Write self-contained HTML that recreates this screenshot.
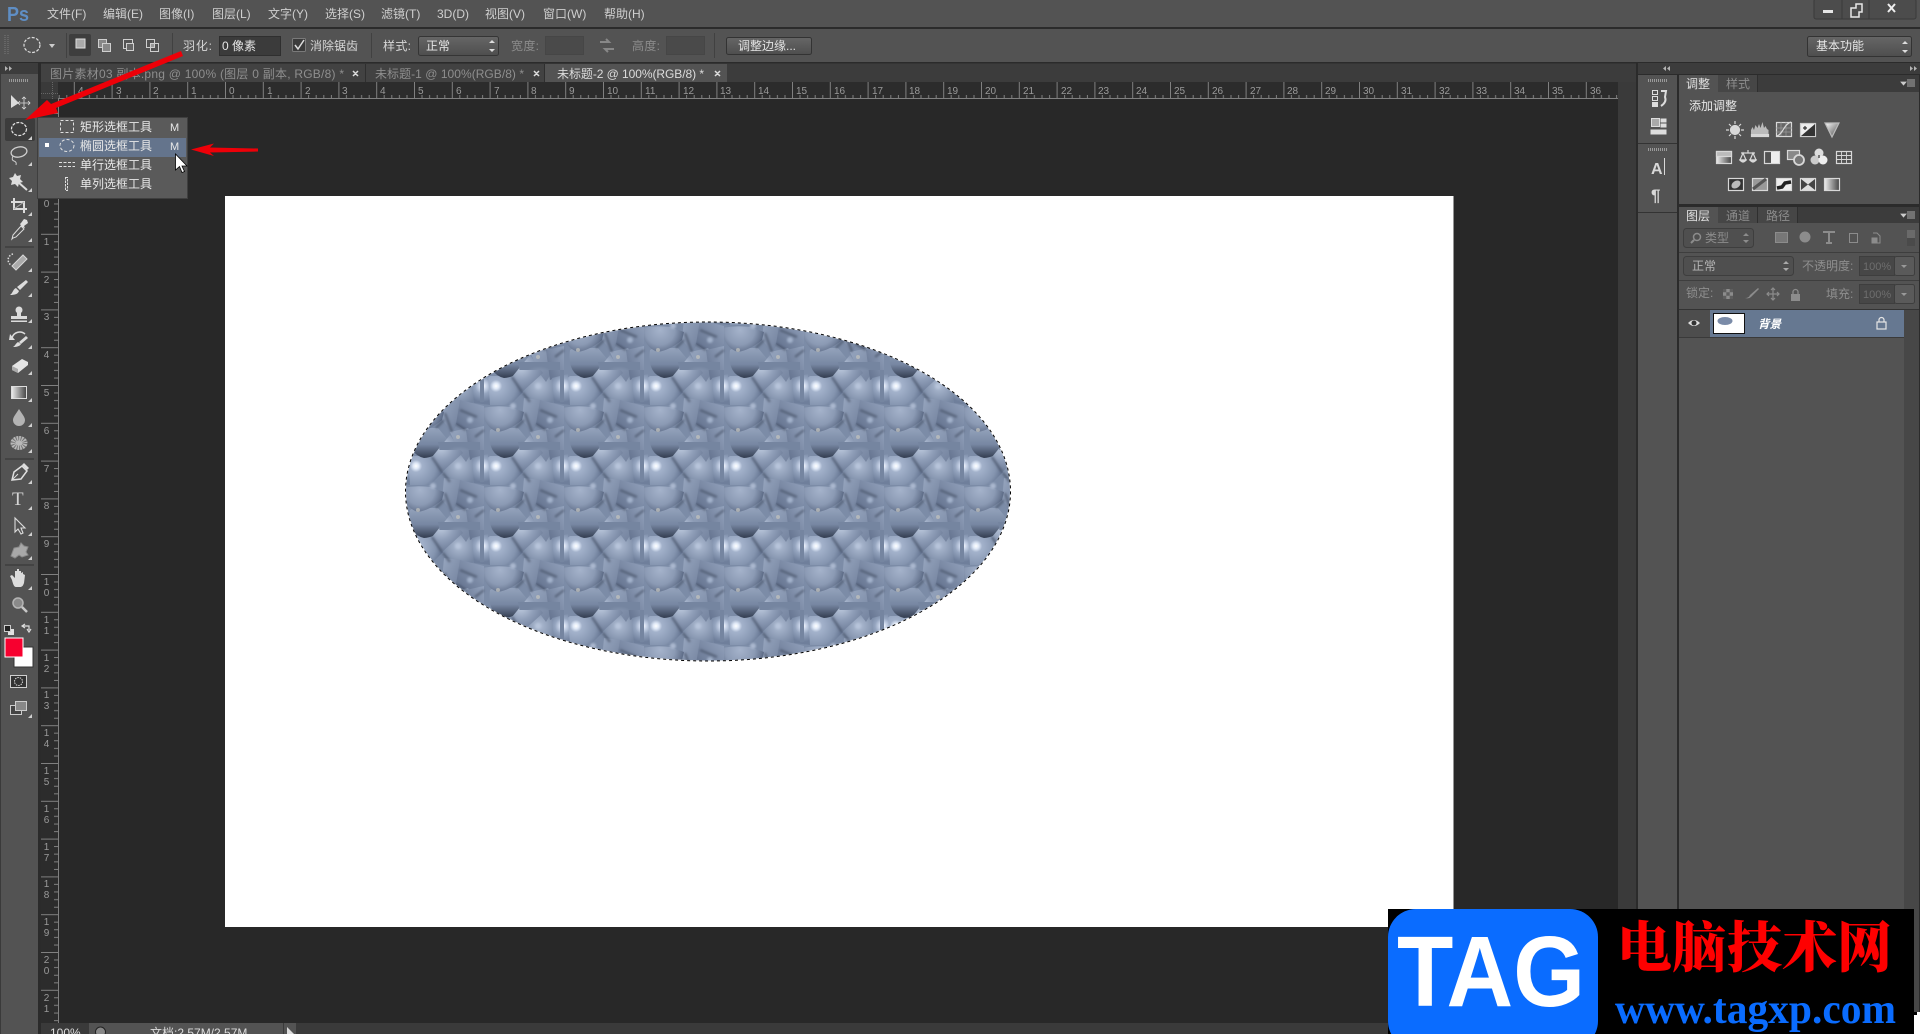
<!DOCTYPE html>
<html lang="zh"><head><meta charset="utf-8"><title>Photoshop</title>
<style>html,body{margin:0;padding:0;background:#282828;overflow:hidden}svg{display:block}text{white-space:pre}</style></head>
<body>
<svg xmlns="http://www.w3.org/2000/svg" width="1920" height="1034" viewBox="0 0 1920 1034" font-family="'Liberation Sans','WenQuanYi Zen Hei','Noto Sans CJK SC',sans-serif" font-size="12">
<defs>
<filter id="soft" x="-20%" y="-20%" width="140%" height="140%"><feGaussianBlur stdDeviation="1"/></filter>
<pattern id="rt" patternUnits="userSpaceOnUse" x="225" y="82" width="37.8" height="17">
<path d="M.5 0V17M8 13V17M15.6 13V17M23.2 13V17M30.8 13V17" stroke="#808080" fill="none"/>
</pattern>
<pattern id="rl" patternUnits="userSpaceOnUse" x="41" y="196" width="17" height="37.8">
<path d="M0 .5H17M13 8H17M13 15.6H17M13 23.2H17M13 30.8H17" stroke="#808080" fill="none"/>
</pattern>
<radialGradient id="sa" gradientUnits="userSpaceOnUse" cx="16" cy="16" r="28"><stop offset="0" stop-color="#fff"/><stop offset=".1" stop-color="#dfe8f7"/><stop offset=".22" stop-color="#a3b2cb"/><stop offset=".7" stop-color="#8595b0"/><stop offset="1" stop-color="#5f6f8c"/></radialGradient>
<radialGradient id="sb" gradientUnits="userSpaceOnUse" cx="3" cy="16" r="16"><stop offset="0" stop-color="#fff"/><stop offset=".2" stop-color="#cdd8ec"/><stop offset=".5" stop-color="#95a5bf"/><stop offset="1" stop-color="#6f7f9b"/></radialGradient>
<radialGradient id="sc" gradientUnits="userSpaceOnUse" cx="20" cy="40" r="27"><stop offset="0" stop-color="#a5b3cb"/><stop offset=".55" stop-color="#8b9ab4"/><stop offset="1" stop-color="#4f5d78"/></radialGradient>
<linearGradient id="sd" gradientUnits="userSpaceOnUse" x1="0" y1="58" x2="0" y2="88"><stop offset="0" stop-color="#94a3bc"/><stop offset=".55" stop-color="#7787a2"/><stop offset="1" stop-color="#333d50"/></linearGradient>
<radialGradient id="se" gradientUnits="userSpaceOnUse" cx="41" cy="77" r="26"><stop offset="0" stop-color="#f2f6fd"/><stop offset=".12" stop-color="#b4c1d6"/><stop offset=".5" stop-color="#8f9eb8"/><stop offset="1" stop-color="#6c7b97"/></radialGradient>
<linearGradient id="sf" x1="0" y1="0" x2="1" y2="1"><stop offset="0" stop-color="#98a7c0"/><stop offset="1" stop-color="#6d7c98"/></linearGradient>
<linearGradient id="sg" x1="1" y1="0" x2="0" y2="1"><stop offset="0" stop-color="#94a3bd"/><stop offset="1" stop-color="#5f6e8a"/></linearGradient>
<radialGradient id="sh" gradientUnits="userSpaceOnUse" cx="59" cy="16" r="20"><stop offset="0" stop-color="#aebcd3"/><stop offset="1" stop-color="#7585a0"/></radialGradient>
<g id="tile">
<polygon points="38,-8 84,-8 84,32 58,34 44,24" fill="url(#sh)"/>
<polygon points="44,28 62,30 60,50 52,62 42,50" fill="url(#sf)"/>
<polygon points="60,30 84,36 84,54 68,62 56,54" fill="url(#sg)"/>
<polygon points="50,62 68,58 78,72 66,92 60,84" fill="url(#sf)"/>
<polygon points="66,60 84,56 84,84 70,90" fill="url(#sg)"/>
<path d="M10 60Q7 84 24 88Q40 87 48 70L38 58L14 58Z" fill="url(#sd)"/>
<polygon points="50,65 32,87 42,102 63,83" fill="url(#se)"/>
<polygon points="10,6 32,6 43,22 30,35 4,35 5,10" fill="url(#sa)"/>
<polygon points="-8,8 8,4 10,35 -6,33" fill="url(#sb)"/>
<path d="M2 38Q16 35 30 37L44 42L42 50Q30 60 18 62Q4 58 2 38Z" fill="url(#sc)"/>
<path d="M43 23L50 32M45 43L52 62M60 40L77 47M75 67L84 60M32 87L42 102M44 50L36 58M66 60L56 54" stroke="#3a4559" stroke-width="2.500" fill="none" opacity=".55" filter="url(#soft)"/>
<circle cx="18" cy="60" r="2" fill="#c4c4be" opacity=".7"/>
<circle cx="58" cy="67" r="2" fill="#c4c4be" opacity=".7"/>
<circle cx="33" cy="36" r="3" fill="#aab8cf" filter="url(#soft)"/>
<circle cx="58" cy="16" r="3" fill="#b7c4da" filter="url(#soft)"/>
<circle cx="70" cy="50" r="3" fill="#a3b2cb" filter="url(#soft)"/>
</g>
<pattern id="bub" patternUnits="userSpaceOnUse" x="480" y="370" width="80" height="80">
<rect width="80" height="80" fill="#7c8ca7"/>
<use href="#tile"/><use href="#tile" y="80"/><use href="#tile" y="-80"/><use href="#tile" x="80"/><use href="#tile" x="-80"/>
</pattern>
<linearGradient id="btn" x1="0" y1="0" x2="0" y2="1"><stop offset="0" stop-color="#666"/><stop offset="1" stop-color="#4e4e4e"/></linearGradient>
<linearGradient id="gr" x1="0" y1="0" x2="1" y2="1"><stop offset="0" stop-color="#fff"/><stop offset="1" stop-color="#444"/></linearGradient>
<linearGradient id="gh" x1="0" y1="0" x2="1" y2="0"><stop offset="0" stop-color="#eee"/><stop offset="1" stop-color="#444"/></linearGradient>
<polygon id="tr" points="4,0 4,4 0,4" fill="#d0d0d0"/>
</defs>

<!-- base -->
<rect width="1920" height="1034" fill="#282828"/>
<rect width="1920" height="27" fill="#535353"/>
<rect y="27" width="1920" height="2" fill="#2b2b2b"/>
<rect y="29" width="1920" height="33" fill="#535353"/>
<rect y="62" width="1920" height="1.5" fill="#2b2b2b"/>

<!-- menu -->
<text x="7" y="21" font-size="20" font-weight="bold" fill="#5f8ec4" textLength="22" lengthAdjust="spacingAndGlyphs">Ps</text>
<g fill="#cfcfcf">
<text x="47" y="18">文件(F)</text><text x="103" y="18">编辑(E)</text><text x="159" y="18">图像(I)</text><text x="212" y="18">图层(L)</text><text x="268" y="18">文字(Y)</text><text x="325" y="18">选择(S)</text><text x="381" y="18">滤镜(T)</text><text x="437" y="18">3D(D)</text><text x="485" y="18">视图(V)</text><text x="543" y="18">窗口(W)</text><text x="604" y="18">帮助(H)</text>
</g>
<!-- window buttons -->
<rect x="1814" y="-1" width="102" height="20" rx="2" fill="#4c4c4c" stroke="#3a3a3a"/>
<path d="M1842 0V19M1869 0V19" stroke="#3a3a3a"/>
<rect x="1823" y="10" width="10" height="3" fill="#e6e6e6"/>
<path d="M1851 8h5v-4h6v8h-3v5h-8z" fill="none" stroke="#e6e6e6" stroke-width="1.5"/>
<path d="M1888 4l7 8M1895 4l-7 8" stroke="#eee" stroke-width="2"/>

<!-- options bar -->
<path d="M5 35V55M8 35V55" stroke="#7a7a7a" stroke-dasharray="1,1"/>
<ellipse cx="32" cy="45" rx="8" ry="7.5" fill="none" stroke="#ddd" stroke-width="1.2" stroke-dasharray="3,1.5"/>
<polygon points="49,44 55,44 52,48" fill="#ccc"/>
<path d="M66.500 33V58M172.500 33V58M371.500 33V58M714.500 33V58" stroke="#414141"/>
<rect x="69" y="34" width="22" height="22" rx="2" fill="#3e3e3e"/>
<rect x="76" y="39" width="9" height="9" fill="#aaa" stroke="#ddd"/>
<g fill="none" stroke="#cfcfcf"><rect x="98.500" y="39.500" width="8" height="8" fill="#888"/><rect x="102.500" y="43.500" width="8" height="8" fill="#888"/>
<rect x="123.500" y="39.500" width="9" height="9"/><rect x="126.500" y="43.500" width="7" height="7" fill="#666"/>
<rect x="146.500" y="39.500" width="8" height="8"/><rect x="150.500" y="43.500" width="8" height="8"/><rect x="150.500" y="43.500" width="4" height="4" fill="#999"/></g>
<text x="183" y="50" fill="#d6d6d6" textLength="29">羽化:</text>
<rect x="219.500" y="36.500" width="61" height="19" fill="#3b3b3b" stroke="#2f2f2f"/>
<text x="222" y="50" fill="#e6e6e6">0 像素</text>
<rect x="292.500" y="38.500" width="13" height="13" rx="1" fill="#3b3b3b" stroke="#7a7a7a"/>
<path d="M295 45l3 4 6-9" fill="none" stroke="#ddd" stroke-width="1.5"/>
<text x="310" y="50" fill="#d6d6d6">消除锯齿</text>
<text x="383" y="50" fill="#d6d6d6" textLength="28">样式:</text>
<rect x="418.500" y="36.500" width="80" height="19" rx="2" fill="url(#btn)" stroke="#353535"/>
<text x="426" y="50" fill="#e6e6e6">正常</text>
<path d="M489 43l3-3 3 3zM489 49l3 3 3-3z" fill="#ddd"/>
<text x="511" y="50" fill="#8c8c8c" textLength="28">宽度:</text>
<rect x="545.500" y="36.500" width="38" height="18" fill="#4a4a4a" stroke="#464646"/>
<path d="M600 42h9l-3-3M614 49h-9l3 3" fill="none" stroke="#888" stroke-width="2"/>
<text x="632" y="50" fill="#8c8c8c" textLength="28">高度:</text>
<rect x="666.500" y="36.500" width="38" height="18" fill="#4a4a4a" stroke="#464646"/>
<rect x="726.500" y="37.500" width="85" height="17" rx="2" fill="url(#btn)" stroke="#333"/>
<text x="738" y="50" fill="#e2e2e2">调整边缘...</text>
<rect x="1807.500" y="36.500" width="104" height="20" rx="2" fill="url(#btn)" stroke="#333"/>
<text x="1816" y="50" fill="#e6e6e6">基本功能</text>
<path d="M1902 44l3-3 3 3zM1902 50l3 3 3-3z" fill="#ddd"/>

<!-- doc tabs -->
<rect x="40" y="63.500" width="1596" height="18.500" fill="#3c3c3c"/>
<rect x="40" y="64" width="325" height="18" fill="#424242"/>
<rect x="366" y="64" width="178" height="18" fill="#424242"/>
<rect x="545" y="64" width="182" height="18" fill="#535353"/>
<path d="M365.500 64V82M544.500 64V82" stroke="#2f2f2f"/>
<text x="50" y="78" fill="#8e8e8e" textLength="294">图片素材03 副本.png @ 100% (图层 0 副本, RGB/8) *</text>
<text x="375" y="78" fill="#8e8e8e" textLength="149">未标题-1 @ 100%(RGB/8) *</text>
<text x="557" y="78" fill="#dcdcdc" textLength="147">未标题-2 @ 100%(RGB/8) *</text>
<path d="M353 71l5 5M358 71l-5 5M534 71l5 5M539 71l-5 5M715 71l5 5M720 71l-5 5" stroke="#ddd" stroke-width="1.5"/>

<!-- rulers -->
<rect x="40" y="82" width="1578" height="17" fill="#2c2c2c"/>
<rect x="41" y="82" width="17" height="941" fill="#2c2c2c"/>
<rect x="58" y="82" width="1560" height="17" fill="url(#rt)"/>
<rect x="41" y="99" width="17" height="924" fill="url(#rl)"/>
<rect x="58" y="98" width="1560" height="1" fill="#808080"/>
<rect x="58" y="99" width="1" height="924" fill="#808080"/>
<rect x="41" y="82" width="17" height="17" fill="#3a3a3a"/>
<path d="M41 93.500H58M52.500 82V99" stroke="#666" stroke-dasharray="1,1"/>
<g font-size="10" fill="#9a9a9a" font-family="'Liberation Sans',sans-serif">
<text x="78" y="94">4</text><text x="116" y="94">3</text><text x="153" y="94">2</text><text x="191" y="94">1</text><text x="229" y="94">0</text><text x="267" y="94">1</text><text x="305" y="94">2</text><text x="342" y="94">3</text><text x="380" y="94">4</text><text x="418" y="94">5</text><text x="456" y="94">6</text><text x="494" y="94">7</text><text x="531" y="94">8</text><text x="569" y="94">9</text><text x="607" y="94">10</text><text x="645" y="94">11</text><text x="683" y="94">12</text><text x="720" y="94">13</text><text x="758" y="94">14</text><text x="796" y="94">15</text><text x="834" y="94">16</text><text x="872" y="94">17</text><text x="909" y="94">18</text><text x="947" y="94">19</text><text x="985" y="94">20</text><text x="1023" y="94">21</text><text x="1061" y="94">22</text><text x="1098" y="94">23</text><text x="1136" y="94">24</text><text x="1174" y="94">25</text><text x="1212" y="94">26</text><text x="1250" y="94">27</text><text x="1287" y="94">28</text><text x="1325" y="94">29</text><text x="1363" y="94">30</text><text x="1401" y="94">31</text><text x="1439" y="94">32</text><text x="1476" y="94">33</text><text x="1514" y="94">34</text><text x="1552" y="94">35</text><text x="1590" y="94">36</text>
</g>
<g font-size="10" fill="#9a9a9a" text-anchor="middle" font-family="'Liberation Sans',sans-serif">
<text x="46.500" y="207">0</text><text x="46.500" y="245">1</text><text x="46.500" y="283">2</text><text x="46.500" y="320">3</text><text x="46.500" y="358">4</text><text x="46.500" y="396">5</text><text x="46.500" y="434">6</text><text x="46.500" y="472">7</text><text x="46.500" y="509">8</text><text x="46.500" y="547">9</text>
<text x="46.500" y="585">1</text><text x="46.500" y="596">0</text><text x="46.500" y="623">1</text><text x="46.500" y="634">1</text><text x="46.500" y="661">1</text><text x="46.500" y="672">2</text><text x="46.500" y="698">1</text><text x="46.500" y="709">3</text><text x="46.500" y="736">1</text><text x="46.500" y="747">4</text><text x="46.500" y="774">1</text><text x="46.500" y="785">5</text><text x="46.500" y="812">1</text><text x="46.500" y="823">6</text><text x="46.500" y="850">1</text><text x="46.500" y="861">7</text><text x="46.500" y="887">1</text><text x="46.500" y="898">8</text><text x="46.500" y="925">1</text><text x="46.500" y="936">9</text><text x="46.500" y="963">2</text><text x="46.500" y="974">0</text><text x="46.500" y="1001">2</text><text x="46.500" y="1012">1</text>
</g>

<!-- canvas -->
<rect x="225" y="196" width="1228.500" height="731" fill="#fff"/>
<ellipse cx="708" cy="491.500" rx="302.500" ry="169.500" fill="url(#bub)"/>
<ellipse cx="708" cy="491.500" rx="302.500" ry="169.500" fill="none" stroke="#fff" stroke-width="1"/>
<ellipse cx="708" cy="491.500" rx="302.500" ry="169.500" fill="none" stroke="#000" stroke-width="1" stroke-dasharray="3,3"/>

<!-- scrollbar + docks background -->
<rect x="1618" y="82" width="18" height="952" fill="#3a3a3a"/>
<rect x="1636" y="63" width="284" height="971" fill="#2b2b2b"/>
<rect x="1638" y="63" width="282" height="11" fill="#3c3c3c"/>
<path d="M1670 66l-3 2.500 3 2.500zM1666 66l-3 2.500 3 2.500zM1910 66l3 2.500-3 2.500zM1914 66l3 2.500-3 2.500z" fill="#b4b4b4"/>
<rect x="1638" y="75" width="39" height="959" fill="#535353"/>
<rect x="1638" y="143" width="39" height="1" fill="#333"/>
<rect x="1638" y="212" width="39" height="1" fill="#333"/>
<path d="M1648 80.500H1667M1648 149.500H1667" stroke="#9a9a9a" stroke-width="3" stroke-dasharray="1,1"/>
<g fill="none" stroke="#ddd">
<rect x="1652.500" y="90.500" width="5" height="4"/><rect x="1652.500" y="96.500" width="5" height="4"/><rect x="1652.500" y="102.500" width="5" height="4" fill="#ddd"/>
<path d="M1661 91h5l-1 6q2 5-4 9" stroke-width="2"/>
<rect x="1651.500" y="118.500" width="8" height="8" fill="#aaa"/>
<rect x="1661" y="119" width="5" height="3" fill="#ddd"/><rect x="1661" y="124" width="5" height="3" fill="#ddd"/>
<rect x="1651" y="130" width="15" height="4" fill="#ddd"/>
</g>
<text x="1651" y="174" font-size="16" font-weight="bold" fill="#d8d8d8">A</text>
<rect x="1664" y="158" width="1" height="17" fill="#d8d8d8"/>
<text x="1651" y="201" font-size="17" font-weight="bold" fill="#d8d8d8">¶</text>

<!-- adjustments panel -->
<rect x="1679" y="75" width="240" height="129" fill="#535353"/>
<rect x="1679" y="75" width="240" height="17" fill="#3c3c3c"/>
<rect x="1679" y="75" width="39" height="18" fill="#535353"/>
<rect x="1718" y="75" width="39" height="17" fill="#464646"/>
<rect x="1757" y="75" width="1" height="17" fill="#2f2f2f"/>
<text x="1686" y="88" fill="#e0e0e0">调整</text>
<text x="1726" y="88" fill="#8c8c8c">样式</text>
<path d="M1901 82h5l-2.500 3zM1907 80h8M1907 82h8M1907 84h8M1907 86h8" fill="#ccc" stroke="#ccc" stroke-width=".8"/>
<text x="1689" y="110" fill="#e6e6e6">添加调整</text>

<g fill="none" stroke="#d8d8d8" stroke-width="1.200">
<circle cx="1735" cy="130" r="4.500" fill="#d8d8d8"/>
<path d="M1735 121v3M1735 136v3M1726 130h3M1741 130h3M1729 124l2 2M1739 134l2 2M1729 136l2-2M1739 126l2-2"/>
<rect x="1751.500" y="134.500" width="17" height="2" fill="#d8d8d8"/>
<path d="M1751 134v-4l1.500-3 1.500 3 1.500-5 2 3 1.500-4 1.500 4 2-6 1.500 6 1.500-2 1.500 3 1.500 1v4z" fill="#bbb" stroke="none"/>
<rect x="1776.500" y="122.500" width="15" height="14" fill="#666"/>
<path d="M1776 128h16M1776 132h16M1781 122v14M1786 122v14" stroke="#999" stroke-width=".7"/>
<path d="M1777 136c6-2 7-12 14-14"/>
<rect x="1800.500" y="123.500" width="15" height="13" fill="#eee" stroke="#ccc"/>
<polygon points="1801,136 1815,124 1815,136" fill="#333" stroke="none"/>
<path d="M1803 128h4M1805 126v4M1809 133h4" stroke="#333"/>
<polygon points="1825,123 1839,123 1832,137" fill="url(#gr)" stroke="#bbb"/>

<rect x="1716.500" y="151.500" width="15" height="12" fill="url(#gh)"/><rect x="1716.500" y="151.500" width="15" height="5" fill="#bbb"/>
<path d="M1748 150v3M1741 153h14M1743 153l-3 7h6zM1753 153l-3 7h6z" />
<path d="M1740 160q3 4 6 0zM1750 160q3 4 6 0z" fill="#d8d8d8"/>
<rect x="1764.500" y="151.500" width="15" height="12"/><rect x="1771" y="152" width="8" height="11" fill="#eee" stroke="none"/>
<rect x="1787.500" y="150.500" width="12" height="9" fill="#888"/>
<circle cx="1799" cy="160" r="5" fill="#777" stroke-width="1.800"/>
<circle cx="1819" cy="153" r="4.500" fill="#ddd" stroke="none"/><circle cx="1815" cy="160" r="4.500" fill="#ccc" stroke="none"/><circle cx="1823" cy="160" r="4.500" fill="#eee" stroke="none"/><path d="M1819 155v3" stroke="#333"/>
<rect x="1836.500" y="151.500" width="15" height="12"/><path d="M1836 155.500h16M1836 159.500h16M1841.500 151v13M1846.500 151v13" stroke-width=".9"/>

<rect x="1728.500" y="178.500" width="15" height="12" fill="#333"/><ellipse cx="1736" cy="184.500" rx="5" ry="3.500" fill="#bbb" stroke="none" transform="rotate(-35 1736 184.500)"/>
<rect x="1752.500" y="178.500" width="15" height="12" fill="#999"/><path d="M1753 189l13-10" stroke="#555" stroke-width="3"/>
<rect x="1776.500" y="178.500" width="15" height="12" fill="#eee"/><path d="M1777 188l5-1 3-4 6-1" stroke="#222" stroke-width="3.500"/>
<rect x="1800.500" y="178.500" width="15" height="12" fill="#ddd"/><path d="M1801 179l7 5.500-7 5.500zM1815 179l-7 5.500 7 5.500z" fill="#444" stroke="none"/>
<rect x="1824.500" y="178.500" width="15" height="12" fill="url(#gh)"/>
</g>

<!-- layers panel -->
<rect x="1679" y="207" width="240" height="827" fill="#535353"/>
<rect x="1679" y="207" width="240" height="16" fill="#3c3c3c"/>
<rect x="1679" y="207" width="39" height="17" fill="#535353"/>
<rect x="1718" y="207" width="39" height="16" fill="#464646"/><rect x="1757" y="207" width="40" height="16" fill="#464646"/>
<path d="M1757.500 207V223M1797.500 207V223" stroke="#2f2f2f"/>
<text x="1686" y="220" fill="#e0e0e0">图层</text>
<text x="1726" y="220" fill="#8c8c8c">通道</text>
<text x="1766" y="220" fill="#8c8c8c">路径</text>
<path d="M1901 214h5l-2.500 3zM1907 212h8M1907 214h8M1907 216h8M1907 218h8" fill="#ccc" stroke="#ccc" stroke-width=".8"/>
<rect x="1683.500" y="228.500" width="70" height="19" rx="3" fill="#4f4f4f" stroke="#3e3e3e"/>
<circle cx="1697" cy="237" r="3.500" fill="none" stroke="#8c8c8c" stroke-width="1.500"/><path d="M1694 240l-3 3" stroke="#8c8c8c" stroke-width="2"/>
<text x="1705" y="242" fill="#8c8c8c">类型</text>
<path d="M1743 236l3-3 3 3zM1743 240l3 3 3-3z" fill="#8c8c8c"/>
<g fill="none" stroke="#8c8c8c">
<rect x="1775.500" y="232.500" width="12" height="10" fill="#777"/>
<circle cx="1805" cy="237" r="5" fill="#8c8c8c"/>
<path d="M1823 232h12M1829 232v11M1826 243h6" stroke-width="2"/>
<rect x="1849.500" y="233.500" width="8" height="9"/>
<path d="M1873 233h4l3 3v7h-6"/><rect x="1872" y="238" width="5" height="5" fill="#8c8c8c"/>
</g>
<rect x="1907" y="230" width="8" height="8" fill="#6a6a6a"/><rect x="1907" y="238" width="8" height="8" fill="#4a4a4a"/>
<rect x="1679" y="252" width="240" height="1" fill="#3e3e3e"/>
<rect x="1683.500" y="256.500" width="110" height="19" rx="3" fill="#4f4f4f" stroke="#3e3e3e"/>
<text x="1692" y="270" fill="#b4b4b4">正常</text>
<path d="M1783 264l3-3 3 3zM1783 268l3 3 3-3z" fill="#aaa"/>
<text x="1802" y="270" fill="#8e8e8e">不透明度:</text>
<rect x="1859.500" y="256.500" width="35" height="19" fill="#474747" stroke="#3e3e3e"/>
<rect x="1894.500" y="256.500" width="20" height="19" rx="2" fill="#5a5a5a" stroke="#3e3e3e"/>
<text x="1863" y="270" fill="#6e6e6e" font-size="11">100%</text>
<path d="M1901 265h6l-3 3z" fill="#999"/>
<rect x="1679" y="280" width="240" height="1" fill="#3e3e3e"/>
<text x="1686" y="297" fill="#8e8e8e">锁定:</text>
<rect x="1723" y="289" width="10" height="10" fill="#8c8c8c"/><path d="M1723 289h3.300v3.300h-3.300zM1729.700 289h3.300v3.300h-3.300zM1726.300 292.300h3.400v3.400h-3.400zM1723 295.700h3.300v3.300h-3.300zM1729.700 295.700h3.300v3.300h-3.300z" fill="#5e5e5e"/>
<path d="M1758 288l-8 7q-1 3-5 3q4 1 6-1l8-8z" fill="#8c8c8c"/>
<path d="M1773 288v12M1767 294h12M1771 290l2-2 2 2M1771 298l2 2 2-2M1769 292l-2 2 2 2M1777 292l2 2-2 2" fill="none" stroke="#8c8c8c" stroke-width="1.200"/>
<rect x="1791" y="294" width="9" height="7" fill="#8c8c8c"/><path d="M1793 294v-2a2.500 2.500 0 0 1 5 0v2" fill="none" stroke="#8c8c8c" stroke-width="1.300"/>
<text x="1826" y="298" fill="#8e8e8e">填充:</text>
<rect x="1859.500" y="284.500" width="35" height="19" fill="#474747" stroke="#3e3e3e"/>
<rect x="1894.500" y="284.500" width="20" height="19" rx="2" fill="#5a5a5a" stroke="#3e3e3e"/>
<text x="1863" y="298" fill="#6e6e6e" font-size="11">100%</text>
<path d="M1901 293h6l-3 3z" fill="#999"/>
<rect x="1679" y="309" width="240" height="1" fill="#333"/>
<rect x="1679" y="310" width="225" height="27" fill="#4d4d4d"/>
<rect x="1710" y="310" width="194" height="27" fill="#667891"/>
<rect x="1679" y="337" width="240" height="1" fill="#3a3a3a"/>
<rect x="1904" y="310" width="15" height="724" fill="#474747"/>
<path d="M1688 323q6-6 12 0q-6 6-12 0z" fill="#ddd"/><circle cx="1694" cy="323" r="2.500" fill="#333"/>
<rect x="1713.500" y="313.500" width="31" height="20" fill="#fff" stroke="#111"/>
<ellipse cx="1725" cy="321" rx="7.500" ry="4" fill="#7a8ba8"/>
<text x="1758" y="328" fill="#fff" font-style="italic" font-weight="bold" font-size="11.500">背景</text>
<rect x="1877" y="322" width="9" height="7" fill="none" stroke="#e6e6e6" stroke-width="1.200"/><path d="M1879 322v-2a2.500 2.500 0 0 1 5 0v2" fill="none" stroke="#e6e6e6" stroke-width="1.200"/>

<!-- toolbar -->
<rect x="0" y="63" width="41" height="971" fill="#535353"/>
<rect x="0" y="63" width="1" height="971" fill="#3a3a3a"/>
<rect x="38" y="63" width="3" height="971" fill="#2b2b2b"/>
<rect x="1" y="63" width="37" height="11" fill="#3c3c3c"/>
<path d="M5 66l3 2.500-3 2.500zM9 66l3 2.500-3 2.500z" fill="#b4b4b4"/>
<path d="M9 80.500H29" stroke="#9a9a9a" stroke-width="3" stroke-dasharray="1,1"/>
<rect x="5" y="118" width="30" height="23" rx="2" fill="#3c3c3c"/>
<g fill="#dcdcdc">
<polygon points="11,95 11,108 19,103"/>
<path d="M24 97v12M18 103h12M22 99l2-2 2 2M22 107l2 2 2-2M20 101l-2 2 2 2M28 101l2 2-2 2" fill="none" stroke="#dcdcdc" stroke-width=".8"/>
<ellipse cx="19" cy="129" rx="7.500" ry="6.500" fill="none" stroke="#e4e4e4" stroke-width="1.200" stroke-dasharray="3,1.300"/>
<ellipse cx="19" cy="152" rx="8" ry="5" fill="none" stroke="#cfcfcf" stroke-width="1.300" transform="rotate(-12 19 152)"/><path d="M13 156q-2 4 1 5t2 4" fill="none" stroke="#cfcfcf"/>
<path d="M15 173l2 3 4-1-1 4 3 3-4 1-1 4-3-3-4 1 1-4-3-3 4-1z" fill="#ddd"/><path d="M18 182l9 8" stroke="#ddd" stroke-width="2"/>
<path d="M14 198v11h10M24 213v-11h-10M11 202h3M24 209h3" fill="none" stroke="#dcdcdc" stroke-width="2"/><path d="M14 209l10-7" stroke="#aaa"/>
<path d="M13 238l-1 1 1-4 8-9 3 3-8 8z" fill="#555" stroke="#dcdcdc"/><path d="M21 223l3-4 3 1 1 3-4 3 1 2-3-1-2-3z" fill="#e0e0e0"/>
<rect x="5" y="246.500" width="29" height="1" fill="#333"/>
<path d="M12 266l11-11 4 4-11 11z" fill="#aaa" stroke="#d8d8d8"/><path d="M13 254a6 6 0 0 0-2 11" fill="none" stroke="#ddd" stroke-dasharray="1.500,1.500" stroke-width="1.500"/>
<path d="M26 280l2 2-8 8-3-3z"/><path d="M16 288l3 3c-1 3-4 4-9 4 3-2 3-6 6-7z"/>
<circle cx="19" cy="310" r="3.500"/><rect x="17" y="312" width="4" height="4"/><rect x="11" y="316" width="16" height="3"/><rect x="11" y="320.500" width="16" height="1.500"/>
<path d="M12 338a8 8 0 0 1 13-4" fill="none" stroke="#ddd" stroke-width="1.500"/><polygon points="10,334 15,340 9,340"/><path d="M26 336l2 2-7 6-2-2z"/><path d="M18 342l3 2c-1 2-4 3-8 3 2-1 3-4 5-5z"/>
<path d="M12 366l10-7 6 3v3l-10 8-6-3z" fill="#e4e4e4"/><path d="M12 366l6 3v4l-6-3z" fill="#aaa"/>
</g>
<rect x="11.500" y="386.500" width="15" height="12" fill="url(#gh)" stroke="#ddd"/>
<path d="M19 409c3 5 6 8 6 11a6 6 0 0 1-12 0c0-3 3-6 6-11z" fill="#b4b4b4"/>
<ellipse cx="19" cy="443" rx="8.500" ry="7" fill="#b8b8b8"/><ellipse cx="19" cy="443" rx="6" ry="5" fill="none" stroke="#555" stroke-dasharray="1,1.500" stroke-width="5" opacity=".7"/>
<rect x="5" y="458.500" width="29" height="1" fill="#333"/>
<path d="M12 480l2-8 8-6 5 5-6 8z" fill="none" stroke="#e0e0e0" stroke-width="1.500"/><path d="M12 480l6-6" stroke="#ddd"/><path d="M22 465l2-2 5 5-2 2z" fill="#ddd"/>
<text x="12" y="505" font-family="'Liberation Serif',serif" font-size="19" fill="#d4d4d4">T</text>
<path d="M15 518v14l3-3 3 5 2-1-2-5h4z" fill="#555" stroke="#dcdcdc" stroke-width="1.100"/>
<path d="M11 556l3-8 5-1 2-4 3 3 4 1-2 5 2 3-6 2-3-2-4 3z" fill="#a8a8a8" stroke="#8a8a8a"/>
<rect x="5" y="564.500" width="29" height="1" fill="#333"/>
<path d="M12 580l-2-4 2-1 3 3v-7h2v-2h2v2h2v2l2-1v2l2 1-1 8c-1 3-2 4-4 4h-4c-2 0-3-3-4-7z" fill="#dcdcdc"/>
<circle cx="18" cy="603" r="5" fill="#8a8a8a" stroke="#b4b4b4" stroke-width="1.500"/><path d="M22 607l5 5" stroke="#c8c8c8" stroke-width="2.500"/>
<rect x="8" y="629" width="6" height="6" fill="#e0e0e0"/><rect x="4.500" y="625.500" width="6" height="6" fill="#222" stroke="#ccc"/>
<path d="M23 626h6v4M27 629l2 3 2-3M25 624l-3 2 3 2" fill="none" stroke="#ddd" stroke-width="1.200"/>
<rect x="14" y="647" width="19" height="20" fill="#fff" stroke="#333"/>
<rect x="5" y="638" width="18" height="19" fill="#f7002f" stroke="#fff"/>
<rect x="10.500" y="675.500" width="16" height="12" fill="#333" stroke="#cfcfcf"/><circle cx="18.500" cy="681.500" r="4" fill="none" stroke="#ddd" stroke-dasharray="1.500,1"/>
<rect x="10.500" y="705.500" width="11" height="9" fill="#444" stroke="#ccc"/><rect x="15.500" y="701.500" width="11" height="9" fill="#888" stroke="#ccc"/>
<g>
<use href="#tr" x="28" y="136"/><use href="#tr" x="28" y="162"/><use href="#tr" x="28" y="188"/><use href="#tr" x="28" y="212"/><use href="#tr" x="28" y="238"/><use href="#tr" x="28" y="268"/><use href="#tr" x="28" y="293"/><use href="#tr" x="28" y="319"/><use href="#tr" x="28" y="345"/><use href="#tr" x="28" y="371"/><use href="#tr" x="28" y="398"/><use href="#tr" x="28" y="423"/><use href="#tr" x="28" y="449"/><use href="#tr" x="28" y="480"/><use href="#tr" x="28" y="506"/><use href="#tr" x="28" y="532"/><use href="#tr" x="28" y="556"/><use href="#tr" x="28" y="586"/><use href="#tr" x="28" y="714"/>
</g>

<!-- flyout -->
<rect x="37.500" y="117.500" width="150" height="81" fill="#5a5a5a" stroke="#3f3f3f"/>
<rect x="39" y="138" width="147" height="19" fill="#64748c"/>
<rect x="45" y="143" width="4" height="4" fill="#fff"/>
<g fill="none" stroke="#e0e0e0" stroke-width="1" stroke-dasharray="3,2">
<rect x="60.500" y="120.500" width="13" height="12"/>
<ellipse cx="67" cy="145.500" rx="7" ry="6"/>
<path d="M59 162.500H75M59 166.500H75" stroke-dasharray="3,1.500"/>
<rect x="65.500" y="177.500" width="2" height="13" stroke-dasharray="2.500,1"/>
</g>
<g fill="#e8e8e8">
<text x="80" y="131">矩形选框工具</text><text x="80" y="150">椭圆选框工具</text><text x="80" y="169">单行选框工具</text><text x="80" y="188">单列选框工具</text>
<text x="170" y="131" font-size="11">M</text><text x="170" y="150" font-size="11">M</text>
</g>
<path d="M175.500 154v16l4-3.500 2.500 6 2.500-1-2.500-5.500h5z" fill="#fff" stroke="#000" stroke-width=".8"/>

<!-- status bar -->
<rect x="41" y="1023" width="1577" height="11" fill="#3a3a3a"/>
<rect x="89" y="1023" width="24" height="11" fill="#535353"/>
<rect x="113" y="1023" width="170" height="11" fill="#535353"/>
<rect x="284" y="1023" width="12" height="11" fill="#535353"/>
<text x="50" y="1037" fill="#dcdcdc">100%</text>
<circle cx="100.500" cy="1032" r="5" fill="#888" stroke="#222"/>
<text x="150" y="1037" fill="#dcdcdc">文档:2.57M/2.57M</text>
<polygon points="287,1027 287,1034 294,1034" fill="#ddd"/>

<!-- red arrows -->
<polygon points="181,51 183,56 56,108 58,113 25,120 47,100 51,104" fill="#ee0008"/>
<polygon points="258,148.500 258,151.500 210,152.500 214,156 191,149.500 214,143.500 210,147.500" fill="#ee0008"/>

<!-- logo -->
<rect x="1388" y="909" width="526" height="125" fill="#000"/>
<rect x="1388" y="909" width="210" height="140" rx="28" fill="#0a6cff"/>
<text x="1397" y="1006" font-family="'Liberation Sans',sans-serif" font-weight="bold" font-size="100" fill="#fff" textLength="188" lengthAdjust="spacingAndGlyphs">TAG</text>
<text x="1617" y="967" font-family="'Noto Serif CJK SC','Noto Sans CJK SC',serif" font-weight="900" font-size="55" fill="#ff0000" textLength="275" lengthAdjust="spacingAndGlyphs">电脑技术网</text>
<text x="1615" y="1023" font-family="'Liberation Serif',serif" font-weight="bold" font-size="42" fill="#0a6cff" textLength="281" lengthAdjust="spacingAndGlyphs">www.tagxp.com</text>
<rect x="1914" y="1012" width="6" height="22" fill="#fff"/>
<rect x="1914" y="1012" width="3" height="3" fill="#000"/>
</svg>
</body></html>
